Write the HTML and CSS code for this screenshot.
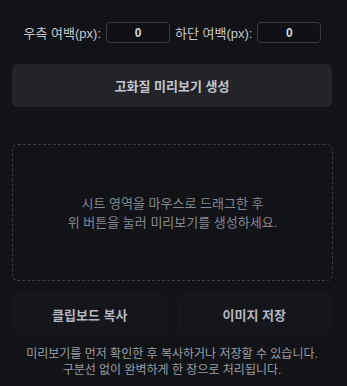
FILE: index.html
```html
<!DOCTYPE html>
<html lang="ko">
<head>
    <meta charset="UTF-8">
    <meta name="viewport" content="width=device-width, initial-scale=1.0">
    <title>미리보기</title>
    <link rel="stylesheet" href="styles.css">
</head>
<body>
    <div class="panel">
        <div class="margin-row">
            <label>우측 여백(px):</label>
            <input type="text" class="margin-input" value="0">
            <label>하단 여백(px):</label>
            <input type="text" class="margin-input" value="0">
        </div>
        <button class="generate-button">고화질 미리보기 생성</button>
        <div class="preview-box">
            <p>시트 영역을 마우스로 드래그한 후<br>위 버튼을 눌러 미리보기를 생성하세요.</p>
        </div>
        <div class="action-row">
            <button class="action-button">클립보드 복사</button>
            <button class="action-button">이미지 저장</button>
        </div>
        <p class="hint">미리보기를 먼저 확인한 후 복사하거나 저장할 수 있습니다.<br>구분선 없이 완벽하게 한 장으로 처리됩니다.</p>
    </div>
</body>
</html>
```

FILE: styles.css
```css
body {
    margin: 0;
    background-color: #111317;
    font-family: "Liberation Sans", "Noto Sans CJK KR", sans-serif;
    color: #c6cad0;
}

.panel {
    padding: 22px 14px 0 12px;
}

.margin-row {
    display: flex;
    align-items: center;
    justify-content: center;
    gap: 5px;
    font-size: 13px;
    height: 21px;
}

.margin-input {
    width: 64px;
    height: 21px;
    box-sizing: border-box;
    background-color: #0f1114;
    border: 1px solid #393b40;
    border-radius: 4px;
    color: #d4d8de;
    font-family: inherit;
    font-size: 12px;
    font-weight: bold;
    text-align: center;
    padding: 0;
}

.generate-button {
    display: block;
    width: 320px;
    height: 43px;
    margin-top: 21px;
    background-color: #232427;
    border: none;
    border-radius: 6px;
    color: #c3c7cd;
    font-family: inherit;
    font-size: 13px;
    font-weight: bold;
}

.preview-box {
    height: 137px;
    margin-top: 37px;
    box-sizing: border-box;
    border: 1px dashed #3c3e43;
    border-radius: 6px;
    display: flex;
    align-items: center;
    justify-content: center;
}

.preview-box p {
    margin: 0;
    text-align: center;
    font-size: 13px;
    line-height: 19px;
    color: #858a92;
}

.action-row {
    display: flex;
    gap: 9px;
    width: 320px;
    margin-top: 12px;
}

.action-button {
    flex: 1;
    height: 42px;
    background-color: #14161a;
    border: none;
    border-radius: 6px;
    color: #b4b8bf;
    font-family: inherit;
    font-size: 13px;
    font-weight: bold;
}

.hint {
    margin: 11px 0 0;
    width: 320px;
    text-align: center;
    font-size: 12px;
    line-height: 16px;
    color: #9a9fa7;
}
```
